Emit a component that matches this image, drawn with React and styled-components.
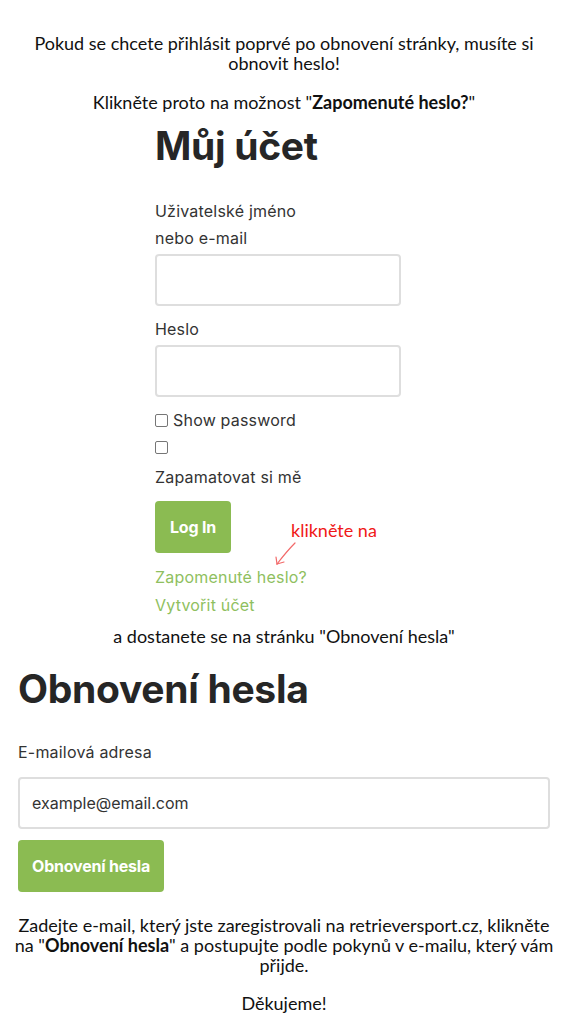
import React from "react";
import styled, { createGlobalStyle } from "styled-components";

const Global = createGlobalStyle`
  html, body { margin: 0; padding: 0; background: #fff; }
  body { font-family: "Lato", "Liberation Sans", sans-serif; color: #111; }
  * { box-sizing: border-box; }
`;

const Page = styled.div`
  width: 568px;
  display: flex;
  flex-direction: column;
`;

const Note = styled.div`
  font-family: "Lato", "Liberation Sans", sans-serif;
  font-size: 18px;
  line-height: 20px;
  text-align: center;
  color: #111;
  padding: ${(p) => p.$pad || "0"};
  p { margin: 0; }
  p + p { margin-top: ${(p) => p.$gap || "19px"}; }
  b { font-weight: 700; display: inline-block; line-height: 20px; }
`;

const Section = styled.section`
  padding-left: ${(p) => p.$left}px;
  padding-right: ${(p) => p.$right || 0}px;
  display: flex;
  flex-direction: column;
  font-family: "Inter", "Liberation Sans", sans-serif;
  color: #2a2a2a;
`;

const Heading = styled.h1`
  margin: 0;
  font-family: "Inter", "Liberation Sans", sans-serif;
  font-weight: 700;
  font-size: 39px;
  line-height: 48px;
  letter-spacing: -0.3px;
  color: #262626;
`;

const Label = styled.label`
  display: block;
  font-size: 16px;
  line-height: 27px;
  letter-spacing: 0.2px;
  color: #333;
`;

const Input = styled.input`
  display: block;
  width: ${(p) => p.$w || "246px"};
  height: 52px;
  border: 2px solid #dedede;
  border-radius: 4px;
  padding: 0 12px;
  font-family: "Inter", "Liberation Sans", sans-serif;
  font-size: 16px;
  color: #333;
  outline: none;
  background: #fff;
  &::placeholder { color: #333; }
`;

const CheckRow = styled.div`
  display: flex;
  align-items: center;
  gap: 5px;
  min-height: 27px;
  font-size: 16px;
  line-height: 27px;
  letter-spacing: 0.2px;
  color: #333;
`;

const Box = styled.span`
  width: 13px;
  height: 13px;
  border: 1px solid #767676;
  border-radius: 2px;
  display: inline-block;
  background: #fff;
  flex: none;
`;

const Button = styled.button`
  align-self: flex-start;
  height: 52px;
  padding: 0 ${(p) => p.$px || 16}px;
  background: #8bbb52;
  border: none;
  border-radius: 4px;
  color: #fff;
  font-family: "Inter", "Liberation Sans", sans-serif;
  font-weight: 700;
  font-size: 16px;
  letter-spacing: -0.2px;
`;

const LinkText = styled.a`
  display: block;
  color: #8fbf60;
  font-size: 16px;
  line-height: 28px;
  letter-spacing: 0.2px;
  text-decoration: none;
`;

const Hint = styled.div`
  position: relative;
`;

const Annot = styled.div`
  position: absolute;
  left: 136px;
  top: -43px;
  line-height: 20px;
  font-family: "Lato", "Liberation Sans", sans-serif;
  font-size: 18px;
  color: #f01818;
  white-space: nowrap;
  svg { position: absolute; left: -18px; top: 22px; }
`;

const Spacer = styled.div`
  height: ${(p) => p.$h}px;
  flex: none;
`;

export default function App() {
  return (
    <>
      <Global />
      <Page>
        <Note $pad="33px 12px 0">
          <p>Pokud se chcete přihlásit poprvé po obnovení stránky, musíte si obnovit heslo!</p>
          <p>Klikněte proto na možnost "<b>Zapomenuté heslo?</b>"</p>
        </Note>
        <Section $left={155}>
          <Spacer $h={10} />
          <Heading>Můj účet</Heading>
          <Spacer $h={28} />
          <Label>Uživatelské jméno<br />nebo e-mail</Label>
          <Spacer $h={2} />
          <Input type="text" />
          <Spacer $h={10} />
          <Label>Heslo</Label>
          <Spacer $h={2} />
          <Input type="password" />
          <Spacer $h={10} />
          <CheckRow><Box />Show password</CheckRow>
          <CheckRow><Box /></CheckRow>
          <Spacer $h={3} />
          <CheckRow>Zapamatovat si mě</CheckRow>
          <Spacer $h={10} />
          <Button $px={15}>Log In</Button>
          <Spacer $h={10} />
          <Hint>
            <Annot>
              klikněte na
              <svg width="26" height="26" viewBox="0 0 26 26" fill="none" stroke="#f26a6a" strokeWidth="1.2" strokeLinecap="round">
                <path d="M22 1 Q14 9 4 22" />
                <path d="M4 22 L3 15" />
                <path d="M4 22 L11 20" />
              </svg>
            </Annot>
            <LinkText href="#">Zapomenuté heslo?</LinkText>
            <LinkText href="#">Vytvořit účet</LinkText>
          </Hint>
        </Section>
        <Note $pad="7px 0 0">
          <p>a dostanete se na stránku "Obnovení hesla"</p>
        </Note>
        <Section $left={18} $right={18}>
          <Spacer $h={19} />
          <Heading>Obnovení hesla</Heading>
          <Spacer $h={26} />
          <Label>E-mailová adresa</Label>
          <Spacer $h={11} />
          <Input $w="532px" placeholder="example@email.com" />
          <Spacer $h={11} />
          <Button $px={14}>Obnovení hesla</Button>
        </Section>
        <Note $pad="23px 10px 0" $gap="18px">
          <p>Zadejte e-mail, který jste zaregistrovali na retrieversport.cz, klikněte na "<b>Obnovení hesla</b>" a postupujte podle pokynů v e-mailu, který vám přijde.</p>
          <p>Děkujeme!</p>
        </Note>
      </Page>
    </>
  );
}
